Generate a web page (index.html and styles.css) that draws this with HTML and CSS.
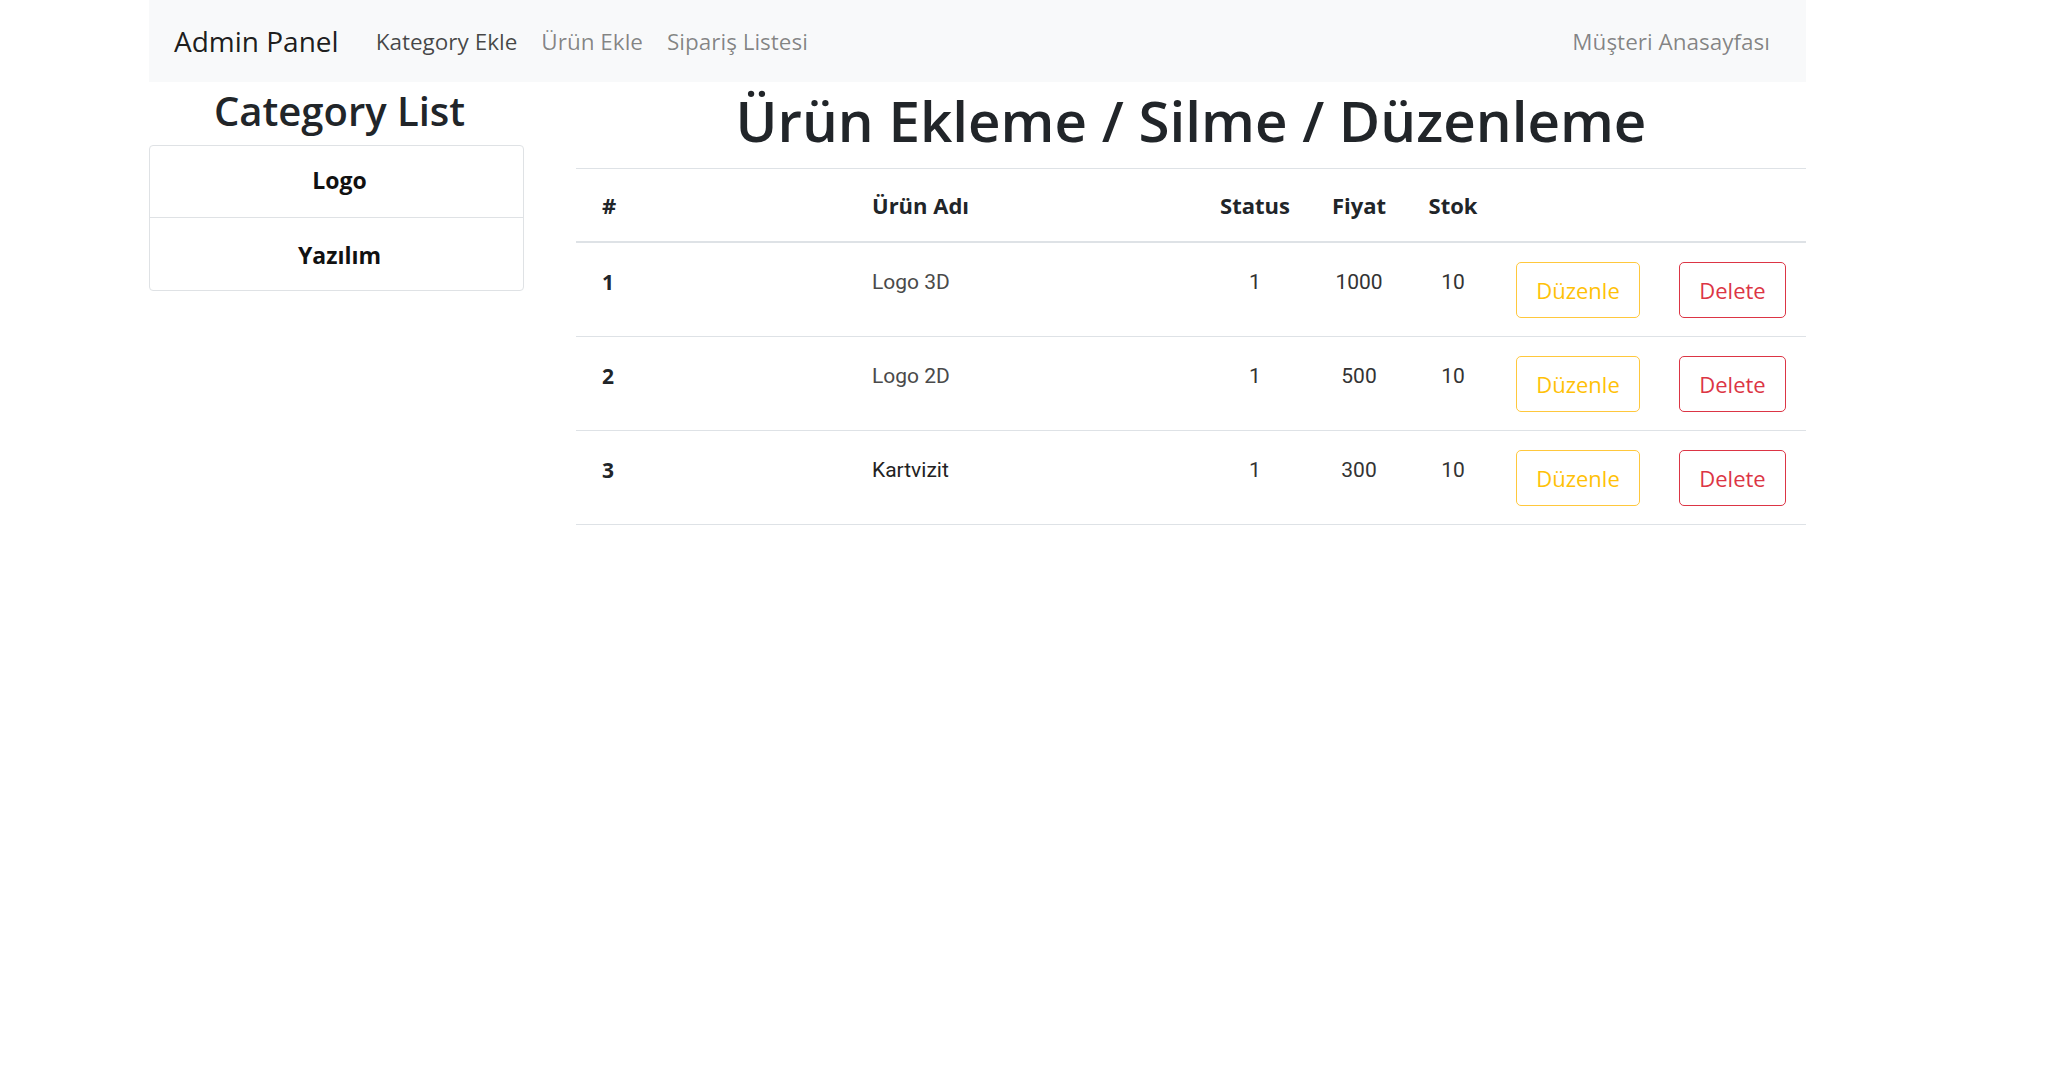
FILE: index.html
```html
<!DOCTYPE html>
<html lang="tr">
<head>
<meta charset="utf-8">
<title>Admin Panel</title>
<link rel="stylesheet" href="styles.css">
</head>
<body>
<div class="page">
  <nav class="navbar">
    <a class="brand" href="#">Admin Panel</a>
    <ul class="nav-links">
      <li><a class="nav-link active" href="#">Kategory Ekle</a></li>
      <li><a class="nav-link" href="#">Ürün Ekle</a></li>
      <li><a class="nav-link" href="#">Sipariş Listesi</a></li>
    </ul>
    <a class="nav-link nav-right" href="#">Müşteri Anasayfası</a>
  </nav>
  <div class="content">
    <aside class="sidebar">
      <h2 class="side-title">Category List</h2>
      <ul class="list-group">
        <li class="list-item">Logo</li>
        <li class="list-item">Yazılım</li>
      </ul>
    </aside>
    <main class="main">
      <h1 class="title">Ürün Ekleme / Silme / Düzenleme</h1>
      <table class="table">
        <colgroup>
          <col class="c-num"><col class="c-name"><col class="c-status"><col class="c-price"><col class="c-stock"><col class="c-actions">
        </colgroup>
        <thead>
          <tr>
            <th class="num">#</th>
            <th class="name">Ürün Adı</th>
            <th class="center">Status</th>
            <th class="center">Fiyat</th>
            <th class="center">Stok</th>
            <th></th>
          </tr>
        </thead>
        <tbody>
          <tr>
            <th class="num">1</th>
            <td class="name">Logo 3D</td>
            <td class="center">1</td>
            <td class="center">1000</td>
            <td class="center">10</td>
            <td class="actions"><div class="btn-row"><button class="btn btn-warning">Düzenle</button><button class="btn btn-danger">Delete</button></div></td>
          </tr>
          <tr>
            <th class="num">2</th>
            <td class="name">Logo 2D</td>
            <td class="center">1</td>
            <td class="center">500</td>
            <td class="center">10</td>
            <td class="actions"><div class="btn-row"><button class="btn btn-warning">Düzenle</button><button class="btn btn-danger">Delete</button></div></td>
          </tr>
          <tr>
            <th class="num">3</th>
            <td class="name dark">Kartvizit</td>
            <td class="center">1</td>
            <td class="center">300</td>
            <td class="center">10</td>
            <td class="actions"><div class="btn-row"><button class="btn btn-warning">Düzenle</button><button class="btn btn-danger">Delete</button></div></td>
          </tr>
        </tbody>
      </table>
    </main>
  </div>
</div>
</body>
</html>
```
FILE: styles.css
```css
* { box-sizing: border-box; }
html, body { margin: 0; padding: 0; background: #fff; }
body {
  font-family: "Open Sans", "Noto Sans", sans-serif;
  color: #212529;
}
.page {
  width: 1657px;
  margin-left: 149px;
}
.navbar {
  height: 82px;
  background: #f8f9fa;
  display: flex;
  align-items: center;
  padding: 0 36px 0 25px;
}
.brand {
  font-size: 28px;
  color: rgba(0,0,0,.9);
  text-decoration: none;
  margin-right: 25px;
}
.nav-links {
  list-style: none;
  display: flex;
  margin: 0;
  padding: 0;
  flex: 1;
}
.nav-link {
  display: block;
  font-size: 22.5px;
  padding: 8px 12px;
  color: rgba(0,0,0,.48);
  text-decoration: none;
}
.nav-link.active { color: rgba(0,0,0,.72); }
.nav-right { padding-right: 0; }
.content {
  display: flex;
  gap: 52px;
}
.sidebar { width: 375px; }
.side-title {
  font-size: 40px;
  font-weight: 600;
  line-height: 48px;
  text-align: center;
  margin: 5px 0 10px;
  padding-left: 6px;
}
.list-group {
  list-style: none;
  margin: 0;
  padding: 0;
  border: 1px solid #dfe2e5;
  border-radius: 4px;
}
.list-item {
  text-align: center;
  font-weight: 700;
  font-size: 23px;
  line-height: 36px;
  padding: 16px 0 19px 6px;
  color: #111;
}
.list-item + .list-item {
  border-top: 1px solid #dfe2e5;
  padding: 19px 0 17px 6px;
}
.main { flex: 1; }
.title {
  font-size: 56.5px;
  font-weight: 600;
  line-height: 66px;
  text-align: center;
  margin: 6px 0 14px;
}
.table {
  width: 100%;
  table-layout: fixed;
  border-collapse: collapse;
}
.c-num { width: 120px; }
.c-name { width: 500px; }
.c-status { width: 118px; }
.c-price { width: 90px; }
.c-stock { width: 98px; }
.c-actions { width: 304px; }
.table thead th {
  border-top: 1px solid #dee2e6;
  border-bottom: 2px solid #dee2e6;
  font-size: 22px;
  font-weight: 700;
  line-height: 33px;
  padding: 20px 0 19px;
  text-align: left;
}
.table tbody th,
.table tbody td {
  border-bottom: 1px solid #dee2e6;
  vertical-align: top;
  padding: 24px 0 0;
  font-family: Roboto, "Liberation Sans", sans-serif;
  font-size: 21px;
  line-height: 30px;
  color: #333;
  font-weight: 400;
  text-align: left;
}
.table tbody th.num {
  font-family: "Open Sans", sans-serif;
  font-weight: 700;
  color: #212529;
}
.num { padding-left: 26px !important; }
.name { padding-left: 176px !important; }
.table tbody td.name { color: #4a4a4a; }
.table tbody td.name.dark { color: #222; }
.table th.center, .table td.center { text-align: center; }
.table tbody td.actions {
  padding: 19px 0 18px 14px;
}
.btn-row {
  display: flex;
  gap: 39px;
}
.btn {
  font-family: "Open Sans", sans-serif;
  font-size: 22px;
  height: 56px;
  padding: 0;
  background: #fff;
  border-radius: 5px;
  border: 1.5px solid;
  cursor: pointer;
}
.btn-warning {
  width: 124px;
  color: #ffc107;
  border-color: #ffc83d;
}
.btn-danger {
  width: 107px;
  color: #dc3545;
  border-color: #dc3545;
}
```
